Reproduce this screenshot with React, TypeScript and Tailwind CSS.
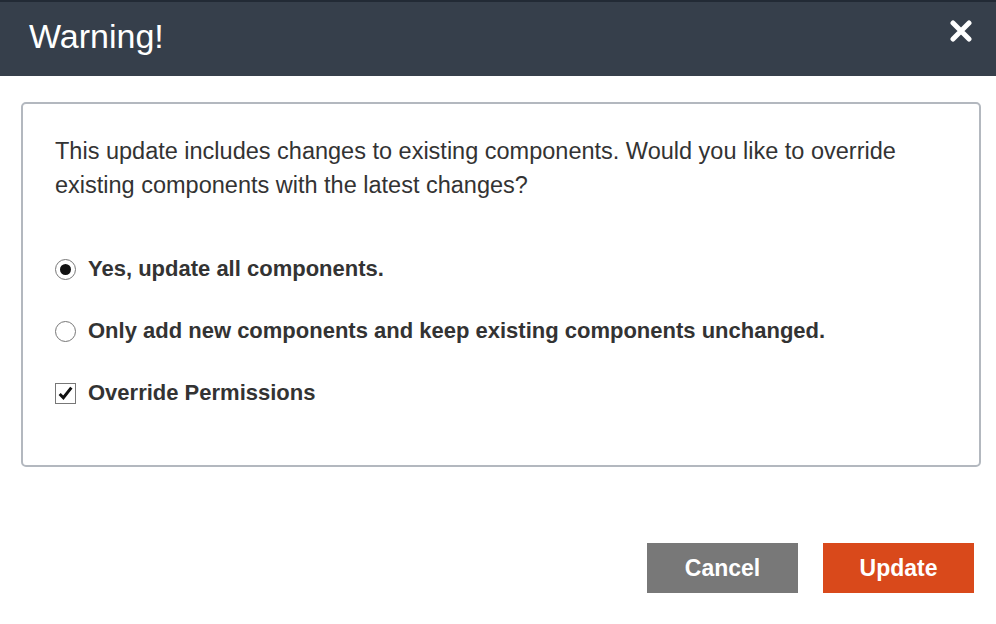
import { useState } from "react";

export default function App() {
  const [mode, setMode] = useState<"all" | "new">("all");
  const [perms, setPerms] = useState(true);

  return (
    <div className="w-[996px] h-[624px] bg-white font-['Liberation_Sans',Arial,sans-serif] text-[#333] flex flex-col">
      <div className="h-[76px] bg-[#363f4b] border-t-2 border-[#222a35] flex items-start justify-between pl-[29px] pr-[24px] pt-[17px]">
        <h1 className="text-[34px] text-white leading-none">Warning!</h1>
        <button className="text-white mt-[1px]">
          <svg width="22" height="22" viewBox="0 0 22 22">
            <path d="M3 3 L19 19 M19 3 L3 19" stroke="white" strokeWidth="5" strokeLinecap="round" />
          </svg>
        </button>
      </div>

      <div className="pl-[21px] pr-[15px] pt-[26px]">
        <div className="border-2 border-[#b3b8bf] rounded-[5px] px-[32px] pt-[30px] pb-[56px]">
          <p className="text-[23.5px] leading-[34px]">
            This update includes changes to existing components. Would you like to override existing components with the latest changes?
          </p>

          <div className="mt-[51px] flex flex-col gap-[30px]">
            <label className="flex items-center gap-[12px] font-bold text-[22px] leading-[32px] cursor-pointer">
              <Radio checked={mode === "all"} onClick={() => setMode("all")} />
              Yes, update all components.
            </label>
            <label className="flex items-center gap-[12px] font-bold text-[22px] leading-[32px] cursor-pointer">
              <Radio checked={mode === "new"} onClick={() => setMode("new")} />
              Only add new components and keep existing components unchanged.
            </label>
            <label className="flex items-center gap-[12px] font-bold text-[22px] leading-[32px] cursor-pointer">
              <span
                onClick={() => setPerms(!perms)}
                className="w-[21px] h-[21px] border border-[#777] bg-white flex items-center justify-center"
              >
                {perms && (
                  <svg width="17" height="17" viewBox="0 0 16 16">
                    <path d="M2.5 8.5 L6 12 L13.5 2.5" stroke="#111" strokeWidth="2.8" fill="none" />
                  </svg>
                )}
              </span>
              Override Permissions
            </label>
          </div>
        </div>
      </div>

      <div className="flex justify-end gap-[25px] pr-[22px] mt-[76px]">
        <button className="w-[151px] h-[50px] bg-[#787878] text-white font-bold text-[23px]">Cancel</button>
        <button className="w-[151px] h-[50px] bg-[#d9491b] text-white font-bold text-[23px]">Update</button>
      </div>
    </div>
  );
}

function Radio({ checked, onClick }: { checked: boolean; onClick: () => void }) {
  return (
    <span
      onClick={onClick}
      className="w-[21px] h-[21px] rounded-full border border-[#777] bg-white flex items-center justify-center"
    >
      {checked && <span className="w-[11px] h-[11px] rounded-full bg-[#111]" />}
    </span>
  );
}
